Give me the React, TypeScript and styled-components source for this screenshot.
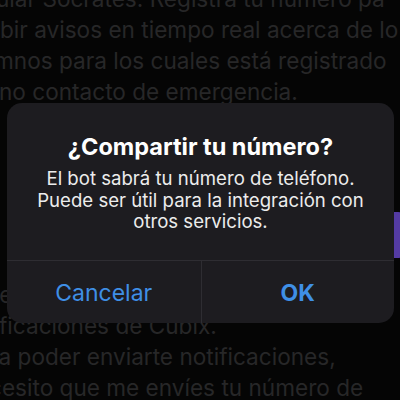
import styled, { createGlobalStyle } from "styled-components";

const GlobalStyle = createGlobalStyle`
  html, body {
    margin: 0;
    padding: 0;
    background: #060606;
  }
  body {
    font-family: Inter, "Noto Sans", "DejaVu Sans", sans-serif;
  }
`;

const Screen = styled.div`
  position: relative;
  width: 400px;
  height: 400px;
  overflow: hidden;
  background: #060606;
`;

const Chat = styled.div`
  display: flex;
  flex-direction: column;
  margin-top: -17px;
`;

const Paragraph = styled.div<{ $gap?: number }>`
  display: flex;
  flex-direction: column;
  margin-top: ${(p) => p.$gap ?? 0}px;
`;

const Line = styled.div<{ $shift?: number }>`
  margin-left: ${(p) => p.$shift ?? 0}px;
  font-size: 22.6px;
  line-height: 31px;
  height: 31px;
  white-space: nowrap;
  color: #2a2a2b;
`;

const InlineButton = styled.div`
  margin: 105px -6px 0 160px;
  height: 46px;
  background: #5a3fae;
  border-radius: 8px;
`;

const Backdrop = styled.div`
  position: absolute;
  inset: 0;
  background: rgba(0, 0, 0, 0.06);
`;

const Dialog = styled.div`
  position: absolute;
  left: 7px;
  top: 103px;
  width: 387px;
  height: 220px;
  display: flex;
  flex-direction: column;
  background: #1d1c20;
  border-radius: 15px;
  overflow: hidden;
`;

const Body = styled.div`
  flex: 1;
  display: flex;
  flex-direction: column;
  align-items: center;
  padding: 30px 10px 0;
  text-align: center;
`;

const Title = styled.div`
  font-size: 23.5px;
  font-weight: 700;
  line-height: 28px;
  color: #ffffff;
`;

const Message = styled.div`
  margin-top: 7px;
  font-size: 18.6px;
  line-height: 21.5px;
  color: #ececec;
`;

const Actions = styled.div`
  display: grid;
  grid-template-columns: 1fr 1fr;
  height: 62px;
  border-top: 1px solid #2e2d32;
`;

const Action = styled.button<{ $primary?: boolean }>`
  display: flex;
  align-items: center;
  justify-content: center;
  border: none;
  background: transparent;
  padding: 2px 0 0;
  font-family: inherit;
  font-size: 23px;
  font-weight: ${(p) => (p.$primary ? 700 : 400)};
  color: #3f8fe6;
  & + & {
    border-left: 1px solid #2e2d32;
  }
`;

export default function App() {
  return (
    <Screen>
      <GlobalStyle />
      <Chat>
        <Paragraph>
          <Line $shift={-4}>ular Socrates. Registra tu número pa</Line>
          <Line $shift={0}>bir avisos en tiempo real acerca de lo</Line>
          <Line $shift={-6}>mnos para los cuales está registrado</Line>
          <Line $shift={-1}>no contacto de emergencia.</Line>
        </Paragraph>
        <InlineButton />
        <Paragraph $gap={21}>
          <Line $shift={-8}>te</Line>
          <Line $shift={-1}>ficaciones de Cubix.</Line>
          <Line $shift={-10}>ra poder enviarte notificaciones,</Line>
          <Line $shift={-11}>cesito que me envíes tu número de</Line>
        </Paragraph>
      </Chat>
      <Backdrop />
      <Dialog>
        <Body>
          <Title>¿Compartir tu número?</Title>
          <Message>
            El bot sabrá tu número de teléfono.
            <br />
            Puede ser útil para la integración con
            <br />
            otros servicios.
          </Message>
        </Body>
        <Actions>
          <Action>Cancelar</Action>
          <Action $primary>OK</Action>
        </Actions>
      </Dialog>
    </Screen>
  );
}
